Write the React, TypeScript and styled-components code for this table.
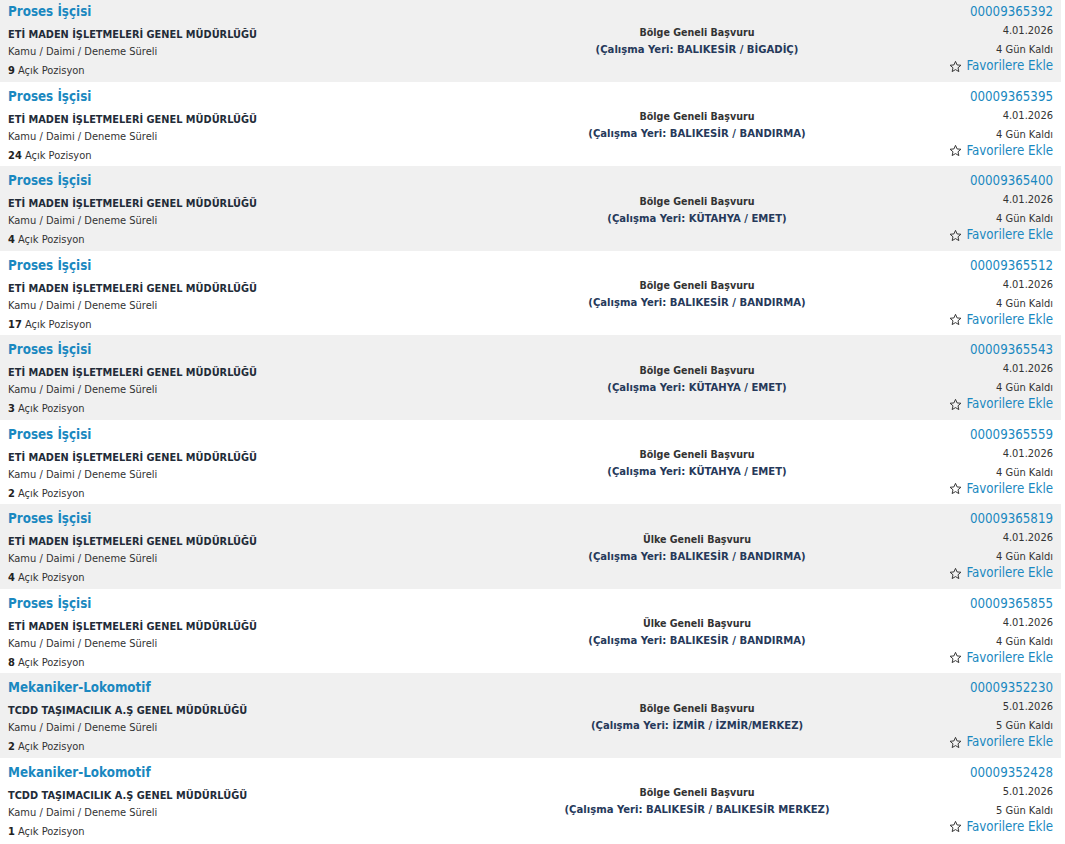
import React from "react";
import styled, { createGlobalStyle } from "styled-components";

const FONT = `"DejaVu Sans Condensed", "DejaVu Sans", sans-serif`;

const Global = createGlobalStyle`
  html, body { margin: 0; padding: 0; background: #ffffff; }
  body { font-family: ${FONT}; color: #333; overflow: hidden; }
`;

type Job = {
  title: string;
  org: string;
  count: number;
  scope: string;
  place: string;
  id: string;
  date: string;
  days: number;
};

const ETI = "ETİ MADEN İŞLETMELERİ GENEL MÜDÜRLÜĞÜ";
const TCDD = "TCDD TAŞIMACILIK A.Ş GENEL MÜDÜRLÜĞÜ";

const jobs: Job[] = [
  { title: "Proses İşçisi", org: ETI, count: 9, scope: "Bölge Geneli Başvuru", place: "BALIKESİR / BİGADİÇ", id: "00009365392", date: "4.01.2026", days: 4 },
  { title: "Proses İşçisi", org: ETI, count: 24, scope: "Bölge Geneli Başvuru", place: "BALIKESİR / BANDIRMA", id: "00009365395", date: "4.01.2026", days: 4 },
  { title: "Proses İşçisi", org: ETI, count: 4, scope: "Bölge Geneli Başvuru", place: "KÜTAHYA / EMET", id: "00009365400", date: "4.01.2026", days: 4 },
  { title: "Proses İşçisi", org: ETI, count: 17, scope: "Bölge Geneli Başvuru", place: "BALIKESİR / BANDIRMA", id: "00009365512", date: "4.01.2026", days: 4 },
  { title: "Proses İşçisi", org: ETI, count: 3, scope: "Bölge Geneli Başvuru", place: "KÜTAHYA / EMET", id: "00009365543", date: "4.01.2026", days: 4 },
  { title: "Proses İşçisi", org: ETI, count: 2, scope: "Bölge Geneli Başvuru", place: "KÜTAHYA / EMET", id: "00009365559", date: "4.01.2026", days: 4 },
  { title: "Proses İşçisi", org: ETI, count: 4, scope: "Ülke Geneli Başvuru", place: "BALIKESİR / BANDIRMA", id: "00009365819", date: "4.01.2026", days: 4 },
  { title: "Proses İşçisi", org: ETI, count: 8, scope: "Ülke Geneli Başvuru", place: "BALIKESİR / BANDIRMA", id: "00009365855", date: "4.01.2026", days: 4 },
  { title: "Mekaniker-Lokomotif", org: TCDD, count: 2, scope: "Bölge Geneli Başvuru", place: "İZMİR / İZMİR/MERKEZ", id: "00009352230", date: "5.01.2026", days: 5 },
  { title: "Mekaniker-Lokomotif", org: TCDD, count: 1, scope: "Bölge Geneli Başvuru", place: "BALIKESİR / BALIKESİR MERKEZ", id: "00009352428", date: "5.01.2026", days: 5 },
];

const List = styled.div`
  width: 1061px;
  margin-top: -3px;
  display: flex;
  flex-direction: column;
`;

const Row = styled.div<{ $alt: boolean }>`
  height: 84.5px;
  box-sizing: border-box;
  display: grid;
  grid-template-columns: 533px 328px 1fr;
  background: ${(p) => (p.$alt ? "#f0f0f0" : "#ffffff")};
`;

const Left = styled.div`
  padding: 5px 0 0 8px;
  display: flex;
  flex-direction: column;
`;

const Title = styled.a`
  font-size: 13.3px;
  font-weight: bold;
  line-height: 20px;
  color: #1a88c0;
  text-decoration: none;
  margin-bottom: 4px;
  white-space: nowrap;
`;

const Org = styled.div`
  font-size: 10.9px;
  font-weight: bold;
  line-height: 18px;
  color: #222b38;
  white-space: nowrap;
`;

const Small = styled.div<{ $gap?: number }>`
  font-size: 11px;
  line-height: 18px;
  color: #333;
  margin-top: ${(p) => p.$gap ?? 0}px;
  white-space: nowrap;
  b { font-weight: bold; color: #222; }
`;

const Middle = styled.div`
  padding-top: 3px;
  display: flex;
  flex-direction: column;
  justify-content: center;
  align-items: center;
  text-align: center;
`;

const Scope = styled.div`
  font-size: 10.6px;
  font-weight: bold;
  line-height: 18px;
  color: #333;
  white-space: nowrap;
`;

const Place = styled.div`
  font-size: 11.2px;
  font-weight: bold;
  line-height: 18px;
  color: #26395a;
  white-space: nowrap;
`;

const Right = styled.div`
  padding: 5px 8px 0 0;
  display: flex;
  flex-direction: column;
  align-items: flex-end;
`;

const Code = styled.a`
  font-size: 13.2px;
  line-height: 20px;
  color: #1a88c0;
  text-decoration: none;
`;

const Info = styled.div<{ $gap?: number }>`
  font-size: 11px;
  line-height: 18px;
  color: #333;
  margin-top: ${(p) => p.$gap ?? 0}px;
  white-space: nowrap;
`;

const Fav = styled.a`
  margin-top: -1px;
  display: flex;
  align-items: center;
  gap: 4px;
  font-size: 13.2px;
  line-height: 16px;
  color: #1a88c0;
  text-decoration: none;
  white-space: nowrap;
  svg { flex: none; }
`;

const StarIcon = () => (
  <svg width="13" height="13" viewBox="0 0 24 24" fill="none" stroke="#333" strokeWidth="1.8" strokeLinejoin="round">
    <path d="M12 2.5l2.9 6.6 7.1.6-5.4 4.7 1.6 7-6.2-3.7-6.2 3.7 1.6-7L2 9.7l7.1-.6z" />
  </svg>
);

export default function App() {
  return (
    <>
      <Global />
      <List>
        {jobs.map((j, i) => (
          <Row key={j.id} $alt={i % 2 === 0}>
            <Left>
              <Title href="#">{j.title}</Title>
              <Org>{j.org}</Org>
              <Small $gap={-1}>Kamu / Daimi / Deneme Süreli</Small>
              <Small $gap={1}>
                <b>{j.count}</b> Açık Pozisyon
              </Small>
            </Left>
            <Middle>
              <Scope>{j.scope}</Scope>
              <Place>(Çalışma Yeri: {j.place})</Place>
            </Middle>
            <Right>
              <Code href="#">{j.id}</Code>
              <Info>{j.date}</Info>
              <Info $gap={1}>{j.days} Gün Kaldı</Info>
              <Fav href="#">
                <StarIcon />
                Favorilere Ekle
              </Fav>
            </Right>
          </Row>
        ))}
      </List>
    </>
  );
}
